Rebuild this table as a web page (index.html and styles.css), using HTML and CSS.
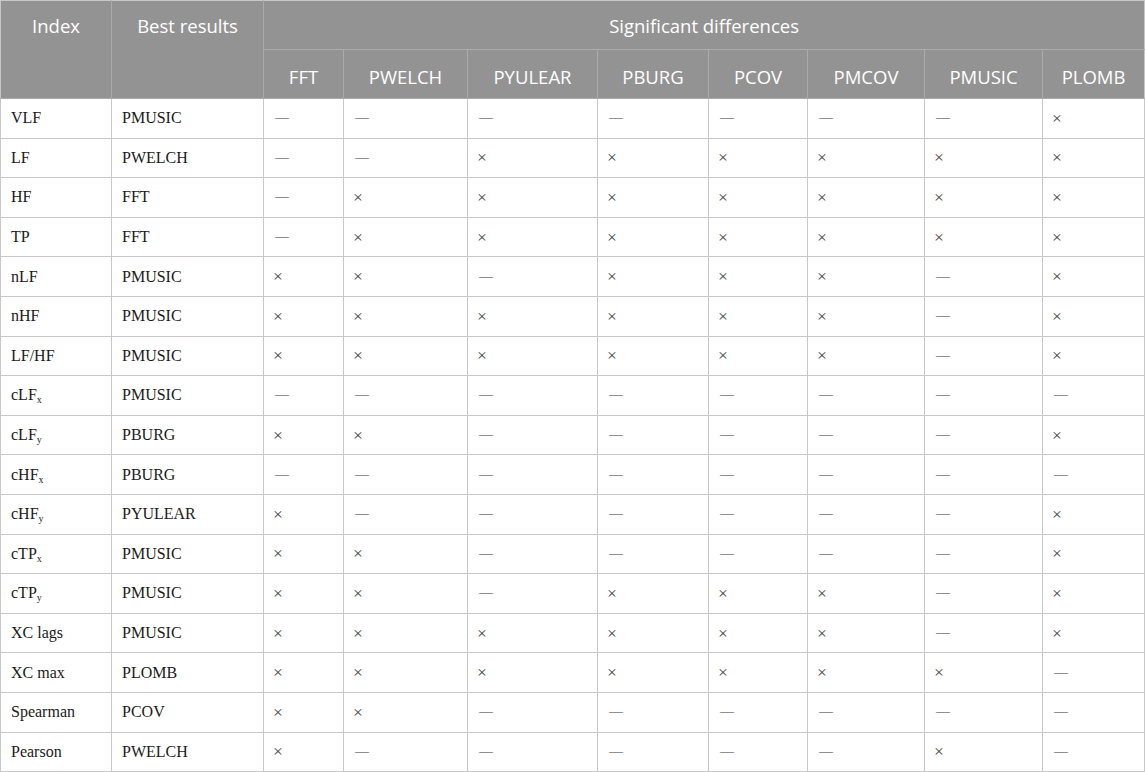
FILE: index.html
```html
<!DOCTYPE html>
<html>
<head>
<meta charset="utf-8">
<link rel="stylesheet" href="styles.css">
</head>
<body>
<table class="results">
  <colgroup>
    <col class="c-index"><col class="c-best"><col class="c-fft"><col class="c-pwelch"><col class="c-pyulear"><col class="c-pburg"><col class="c-pcov"><col class="c-pmcov"><col class="c-pmusic"><col class="c-plomb">
  </colgroup>
  <thead>
    <tr class="h1">
      <th rowspan="2" class="top">Index</th>
      <th rowspan="2" class="top">Best results</th>
      <th colspan="8">Significant differences</th>
    </tr>
    <tr class="h2">
      <th>FFT</th><th>PWELCH</th><th>PYULEAR</th><th>PBURG</th><th>PCOV</th><th>PMCOV</th><th>PMUSIC</th><th>PLOMB</th>
    </tr>
  </thead>
  <tbody>
    <tr><td>VLF</td><td>PMUSIC</td><td class="d">—</td><td class="d">—</td><td class="d">—</td><td class="d">—</td><td class="d">—</td><td class="d">—</td><td class="d">—</td><td>×</td></tr>
    <tr><td>LF</td><td>PWELCH</td><td class="d">—</td><td class="d">—</td><td>×</td><td>×</td><td>×</td><td>×</td><td>×</td><td>×</td></tr>
    <tr><td>HF</td><td>FFT</td><td class="d">—</td><td>×</td><td>×</td><td>×</td><td>×</td><td>×</td><td>×</td><td>×</td></tr>
    <tr><td>TP</td><td>FFT</td><td class="d">—</td><td>×</td><td>×</td><td>×</td><td>×</td><td>×</td><td>×</td><td>×</td></tr>
    <tr><td>nLF</td><td>PMUSIC</td><td>×</td><td>×</td><td class="d">—</td><td>×</td><td>×</td><td>×</td><td class="d">—</td><td>×</td></tr>
    <tr><td>nHF</td><td>PMUSIC</td><td>×</td><td>×</td><td>×</td><td>×</td><td>×</td><td>×</td><td class="d">—</td><td>×</td></tr>
    <tr><td>LF/HF</td><td>PMUSIC</td><td>×</td><td>×</td><td>×</td><td>×</td><td>×</td><td>×</td><td class="d">—</td><td>×</td></tr>
    <tr><td>cLF<sub>x</sub></td><td>PMUSIC</td><td class="d">—</td><td class="d">—</td><td class="d">—</td><td class="d">—</td><td class="d">—</td><td class="d">—</td><td class="d">—</td><td class="d">—</td></tr>
    <tr><td>cLF<sub>y</sub></td><td>PBURG</td><td>×</td><td>×</td><td class="d">—</td><td class="d">—</td><td class="d">—</td><td class="d">—</td><td class="d">—</td><td>×</td></tr>
    <tr><td>cHF<sub>x</sub></td><td>PBURG</td><td class="d">—</td><td class="d">—</td><td class="d">—</td><td class="d">—</td><td class="d">—</td><td class="d">—</td><td class="d">—</td><td class="d">—</td></tr>
    <tr><td>cHF<sub>y</sub></td><td>PYULEAR</td><td>×</td><td class="d">—</td><td class="d">—</td><td class="d">—</td><td class="d">—</td><td class="d">—</td><td class="d">—</td><td>×</td></tr>
    <tr><td>cTP<sub>x</sub></td><td>PMUSIC</td><td>×</td><td>×</td><td class="d">—</td><td class="d">—</td><td class="d">—</td><td class="d">—</td><td class="d">—</td><td>×</td></tr>
    <tr><td>cTP<sub>y</sub></td><td>PMUSIC</td><td>×</td><td>×</td><td class="d">—</td><td>×</td><td>×</td><td>×</td><td class="d">—</td><td>×</td></tr>
    <tr><td>XC lags</td><td>PMUSIC</td><td>×</td><td>×</td><td>×</td><td>×</td><td>×</td><td>×</td><td class="d">—</td><td>×</td></tr>
    <tr><td>XC max</td><td>PLOMB</td><td>×</td><td>×</td><td>×</td><td>×</td><td>×</td><td>×</td><td>×</td><td class="d">—</td></tr>
    <tr><td>Spearman</td><td>PCOV</td><td>×</td><td>×</td><td class="d">—</td><td class="d">—</td><td class="d">—</td><td class="d">—</td><td class="d">—</td><td class="d">—</td></tr>
    <tr><td>Pearson</td><td>PWELCH</td><td>×</td><td class="d">—</td><td class="d">—</td><td class="d">—</td><td class="d">—</td><td class="d">—</td><td>×</td><td class="d">—</td></tr>
  </tbody>
</table>
</body>
</html>
```
FILE: styles.css
```css
html, body {
  margin: 0;
  padding: 0;
  background: #ffffff;
}

.results {
  width: 1145px;
  border-collapse: collapse;
  table-layout: fixed;
  font-family: "Liberation Serif", "Times New Roman", serif;
  font-size: 16px;
  color: #1a1a1a;
  border: 1px solid #c8c8c8;
}

.c-index { width: 111px; }
.c-best { width: 152px; }
.c-fft { width: 80px; }
.c-pwelch { width: 124px; }
.c-pyulear { width: 130px; }
.c-pburg { width: 111px; }
.c-pcov { width: 99px; }
.c-pmcov { width: 117px; }
.c-pmusic { width: 118px; }
.c-plomb { width: 102px; }

.results thead {
  background: #939393;
}

.results th {
  font-family: "Open Sans", "Liberation Sans", sans-serif;
  font-weight: 400;
  font-size: 18.5px;
  color: #ffffff;
  text-align: center;
  border: 1px solid #ababab;
  padding: 0 6px;
  vertical-align: middle;
}

.results th.top {
  vertical-align: top;
  padding-top: 12px;
}

.results tr.h1 { height: 49px; }
.results tr.h2 { height: 49px; }
.results tr.h2 th { padding-top: 4px; }

.results th:first-child { border-left-color: #c8c8c8; }
.results th:last-child { border-right-color: #c8c8c8; }
.results tr.h1 th { border-top-color: #c8c8c8; }

.results tbody tr { height: 39.6px; }

.results td {
  border: 1px solid #c8c8c8;
  padding: 0 10px;
  text-align: left;
  vertical-align: middle;
  white-space: nowrap;
}

.results td:nth-child(n+3) {
  font-size: 17.5px;
  color: #444444;
  padding-left: 9px;
}

.results td.d {
  font-size: 14px;
  color: #3a3a3a;
  padding-left: 11px;
}

.results sub {
  font-size: 10px;
  vertical-align: -3px;
  line-height: 0;
}
```
